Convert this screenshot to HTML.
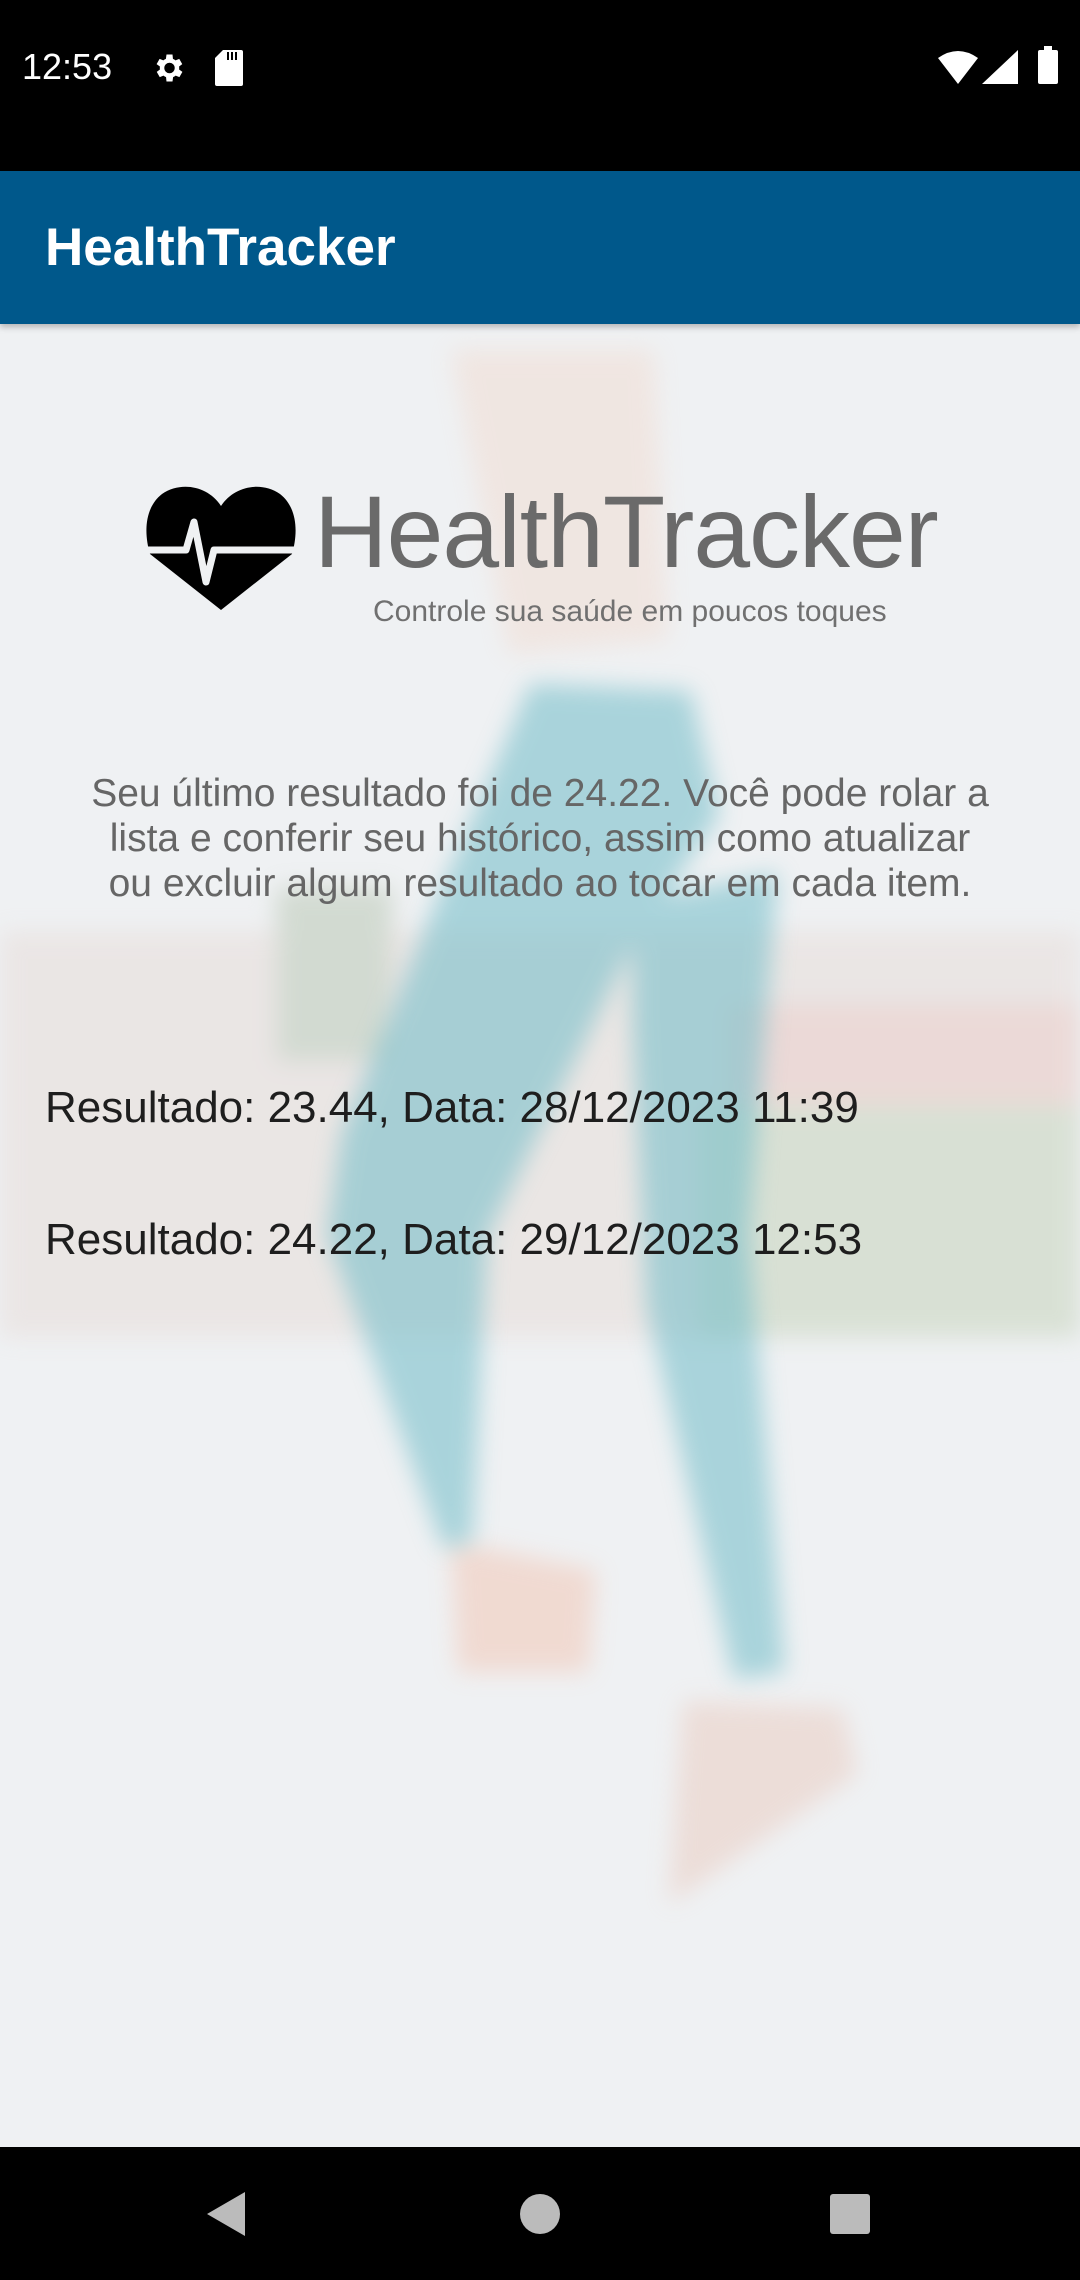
<!DOCTYPE html>
<html><head><meta charset="utf-8"><style>
html,body{margin:0;padding:0;}
body{width:1080px;height:2280px;position:relative;overflow:hidden;background:#eff1f3;font-family:"Liberation Sans",Roboto,sans-serif;}
.sb{position:absolute;left:0;top:0;width:1080px;height:171px;background:#000;}
.ab{position:absolute;left:0;top:171px;width:1080px;height:153px;background:#00588b;box-shadow:0 3px 6px rgba(0,0,0,.25);z-index:3}
.ab span{position:absolute;left:45px;top:46px;color:#fff;font-size:53px;font-weight:bold;}
.nb{position:absolute;left:0;top:2147px;width:1080px;height:133px;background:#000;}
.t{position:absolute;z-index:2;}
</style></head><body>
<svg style="position:absolute;left:0;top:0" width="1080" height="2280" viewBox="0 0 743 1568">
<defs><filter id="b"><feGaussianBlur stdDeviation="8"/></filter></defs>
<g filter="url(#b)" opacity="0.4">
<rect x="0" y="640" width="743" height="280" fill="#e4d6d0"/>
<rect x="500" y="690" width="243" height="70" fill="#e6b7ae"/>
<rect x="480" y="760" width="263" height="160" fill="#b8c9a8"/>
<rect x="190" y="610" width="80" height="120" fill="#a8b9a0"/>
<path d="M310 240 L450 240 L460 440 L350 450 Z" fill="#f1d6c8"/>
<path d="M310 1060 L410 1080 L405 1150 L315 1150Z" fill="#f3b8a0"/>
<path d="M470 1170 L580 1175 L590 1220 L460 1310Z" fill="#e8c0b0"/>
</g>
<g filter="url(#b)" opacity="0.55">
<path d="M435 620 L535 600 L515 850 L540 1150 L505 1155 L445 900 L435 700Z" fill="#6fbcc8"/>
<path d="M365 470 L475 475 L495 560 L440 640 L335 850 L325 1060 L305 1065 L225 850 L235 780 L300 620Z" fill="#6fbcc8"/>
</g>
</svg>
<div class="sb"></div>
<div class="t" style="left:22px;top:46px;color:#fff;font-size:36px;">12:53</div>
<svg class="t" style="left:150px;top:50px" width="36" height="36" viewBox="0 0 24 24"><path fill="#fff" d="M19.4 13a7.5 7.5 0 000-2l2.1-1.6-2-3.5-2.5 1a7 7 0 00-1.7-1L15 3h-4l-.4 2.9a7 7 0 00-1.7 1l-2.5-1-2 3.5L6.6 11a7.5 7.5 0 000 2l-2.1 1.6 2 3.5 2.5-1a7 7 0 001.7 1L11 21h4l.4-2.9a7 7 0 001.7-1l2.5 1 2-3.5zM13 15.5a3.5 3.5 0 110-7 3.5 3.5 0 010 7z"/></svg>
<svg class="t" style="left:214px;top:50px" width="30" height="36" viewBox="0 0 14 18"><path fill="#fff" d="M4 0h9a1 1 0 011 1v16a1 1 0 01-1 1H1a1 1 0 01-1-1V4z"/><path fill="#000" d="M6 1h1v4H6zM8 1h1v4H8zM10 1h1v4h-1z"/></svg>
<svg class="t" style="left:938px;top:50px" width="40" height="34" viewBox="0 0 40 34"><path fill="#fff" d="M0 8Q20-6 40 8L20 34Z"/></svg>
<svg class="t" style="left:982px;top:50px" width="36" height="34" viewBox="0 0 36 34"><path fill="#fff" d="M36 0V34H0Z"/></svg>
<div class="t" style="left:1038px;top:50px;width:20px;height:34px;background:#fff;border-radius:2px"></div>
<div class="t" style="left:1044px;top:46px;width:8px;height:5px;background:#fff"></div>
<div class="ab"><span>HealthTracker</span></div>
<svg class="t" style="left:146px;top:484px" width="150" height="126" viewBox="0 0 150 126">
<path fill="#000" d="M75 22C62 2 35-3 16 10-2 24-2 50 4 70L75 126 146 70C152 50 152 24 134 10 115-3 88 2 75 22Z"/>
<path fill="none" stroke="#eff1f3" stroke-width="7" stroke-linejoin="round" d="M0 66H40L48 38 60 98 68 66H150"/>
</svg>
<div class="t" style="left:314px;top:474px;font-size:102px;color:#6a6a6a;letter-spacing:-1px">HealthTracker</div>
<div class="t" style="left:373px;top:595px;font-size:30px;color:#707070">Controle sua saúde em poucos toques</div>
<div class="t" style="left:0;top:771px;width:1080px;text-align:center;font-size:39px;line-height:45px;color:#666;white-space:nowrap">Seu último resultado foi de 24.22. Você pode rolar a<br>lista e conferir seu histórico, assim como atualizar<br>ou excluir algum resultado ao tocar em cada item.</div>
<div class="t" style="left:45px;top:1083px;font-size:44px;color:#1e1e1e">Resultado: 23.44, Data: 28/12/2023 11:39</div>
<div class="t" style="left:45px;top:1215px;font-size:44px;color:#1e1e1e">Resultado: 24.22, Data: 29/12/2023 12:53</div>
<div class="nb"></div>
<svg class="t" style="left:205px;top:2192px" width="40" height="44" viewBox="0 0 40 44"><path fill="#bbb" d="M40 0V44L2 22Z"/></svg>
<div class="t" style="left:520px;top:2194px;width:40px;height:40px;border-radius:50%;background:#bbb"></div>
<div class="t" style="left:830px;top:2194px;width:40px;height:40px;border-radius:3px;background:#bbb"></div>
</body></html>
